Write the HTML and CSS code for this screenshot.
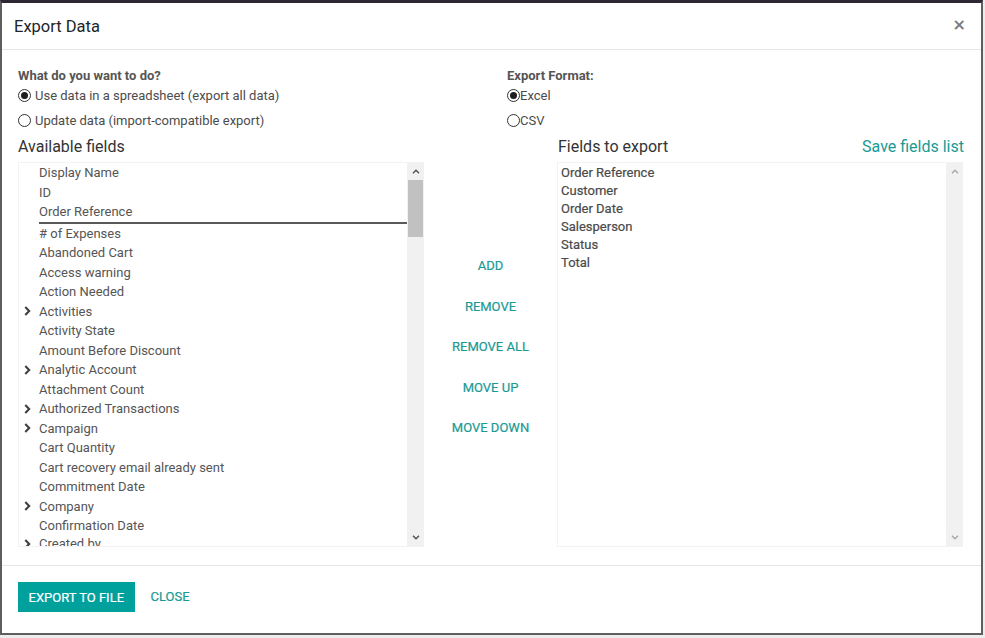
FILE: index.html
```html
<!DOCTYPE html>
<html lang="en">
<head>
<meta charset="utf-8">
<title>Export Data</title>
<link rel="stylesheet" href="styles.css">
</head>
<body>
<div class="frame">
  <header class="modal-header">
    <h4 class="modal-title">Export Data</h4>
    <span class="close">&times;</span>
  </header>
  <main class="modal-body">
    <div class="options">
      <div class="opt-col">
        <div class="opt-label">What do you want to do?</div>
        <label class="radio-row"><span class="radio checked"></span><span class="radio-text">Use data in a spreadsheet (export all data)</span></label>
        <label class="radio-row"><span class="radio"></span><span class="radio-text">Update data (import-compatible export)</span></label>
      </div>
      <div class="opt-col">
        <div class="opt-label">Export Format:</div>
        <label class="radio-row tight"><span class="radio checked"></span><span class="radio-text">Excel</span></label>
        <label class="radio-row tight csv"><span class="radio"></span><span class="radio-text">CSV</span></label>
      </div>
    </div>

    <div class="lists-head">
      <div class="head-title">Available fields</div>
      <div></div>
      <div class="head-right">
        <span class="head-title">Fields to export</span>
        <a class="save-link">Save fields list</a>
      </div>
    </div>

    <div class="lists">
      <div class="listbox">
        <ul class="items avail">
          <li><span class="slot"></span>Display Name</li>
          <li><span class="slot"></span>ID</li>
          <li class="marked"><span class="slot"></span><span class="mark">Order Reference</span></li>
          <li><span class="slot"></span># of Expenses</li>
          <li><span class="slot"></span>Abandoned Cart</li>
          <li><span class="slot"></span>Access warning</li>
          <li><span class="slot"></span>Action Needed</li>
          <li><span class="slot"><svg class="chev" viewBox="0 0 6 9"><path d="M1 1 L4.5 4.5 L1 8"/></svg></span>Activities</li>
          <li><span class="slot"></span>Activity State</li>
          <li><span class="slot"></span>Amount Before Discount</li>
          <li><span class="slot"><svg class="chev" viewBox="0 0 6 9"><path d="M1 1 L4.5 4.5 L1 8"/></svg></span>Analytic Account</li>
          <li><span class="slot"></span>Attachment Count</li>
          <li><span class="slot"><svg class="chev" viewBox="0 0 6 9"><path d="M1 1 L4.5 4.5 L1 8"/></svg></span>Authorized Transactions</li>
          <li><span class="slot"><svg class="chev" viewBox="0 0 6 9"><path d="M1 1 L4.5 4.5 L1 8"/></svg></span>Campaign</li>
          <li><span class="slot"></span>Cart Quantity</li>
          <li><span class="slot"></span>Cart recovery email already sent</li>
          <li><span class="slot"></span>Commitment Date</li>
          <li><span class="slot"><svg class="chev" viewBox="0 0 6 9"><path d="M1 1 L4.5 4.5 L1 8"/></svg></span>Company</li>
          <li><span class="slot"></span>Confirmation Date</li>
          <li class="last"><span class="slot"><svg class="chev" viewBox="0 0 6 9"><path d="M1 1 L4.5 4.5 L1 8"/></svg></span>Created by</li>
        </ul>
        <div class="scrollbar">
          <div class="sb-btn"><svg viewBox="0 0 8 5"><path d="M1 4.2 L4 1.2 L7 4.2"/></svg></div>
          <div class="sb-track"><div class="sb-thumb"></div></div>
          <div class="sb-btn"><svg viewBox="0 0 8 5"><path d="M1 0.8 L4 3.8 L7 0.8"/></svg></div>
        </div>
      </div>

      <div class="actions">
        <a class="act">ADD</a>
        <a class="act">REMOVE</a>
        <a class="act">REMOVE ALL</a>
        <a class="act">MOVE UP</a>
        <a class="act">MOVE DOWN</a>
      </div>

      <div class="listbox">
        <ul class="items chosen">
          <li>Order Reference</li>
          <li>Customer</li>
          <li>Order Date</li>
          <li>Salesperson</li>
          <li>Status</li>
          <li>Total</li>
        </ul>
        <div class="scrollbar disabled">
          <div class="sb-btn"><svg viewBox="0 0 8 5"><path d="M1 4.2 L4 1.2 L7 4.2"/></svg></div>
          <div class="sb-track"></div>
          <div class="sb-btn"><svg viewBox="0 0 8 5"><path d="M1 0.8 L4 3.8 L7 0.8"/></svg></div>
        </div>
      </div>
    </div>
  </main>
  <footer class="modal-footer">
    <button class="btn-primary">EXPORT TO FILE</button>
    <a class="btn-link">CLOSE</a>
  </footer>
</div>
</body>
</html>
```

FILE: styles.css
```css
* { box-sizing: border-box; }
html, body { margin: 0; padding: 0; }
body {
  background: #ececec;
  font-family: Roboto, "Liberation Sans", Arial, sans-serif;
  font-size: 13px;
  color: #4c4c4c;
  width: 985px;
  height: 638px;
  overflow: hidden;
}
.frame {
  width: 983px;
  height: 635px;
  background: #fff;
  border-top: 3px solid #2e2732;
  border-left: 2px solid #5e5e5e;
  border-right: 2px solid #5e5e5e;
  border-bottom: 2px solid #5e5e5e;
  display: flex;
  flex-direction: column;
}
.modal-header {
  height: 47px;
  flex: none;
  border-bottom: 1px solid #e6e6e6;
  display: flex;
  align-items: center;
  justify-content: space-between;
  padding: 0 15px 0 12px;
}
.modal-title {
  margin: 0;
  font-size: 16.5px;
  font-weight: 400;
  color: #212529;
}
.close {
  font-family: "DejaVu Sans", sans-serif;
  font-size: 16px;
  font-weight: 700;
  color: #7a7a7a;
  line-height: 1;
  margin-top: -3px;
}
.modal-body {
  flex: none;
  padding: 18px 16px 18px 16px;
  border-bottom: 1px solid #e6e6e6;
}
.options {
  display: grid;
  grid-template-columns: 1fr 1fr;
  column-gap: 31px;
}
.opt-label {
  font-weight: 700;
  line-height: 16px;
  color: #555;
}
.radio-row {
  display: flex;
  align-items: center;
  height: 20px;
  margin-top: 1px;
  margin-bottom: 5px;
}
.radio-row + .radio-row { margin-top: 0; margin-bottom: 0; }
.radio {
  width: 13px;
  height: 13px;
  border: 1px solid #333;
  border-radius: 50%;
  display: grid;
  place-items: center;
  flex: none;
  background: #fff;
}
.radio.checked::after {
  content: "";
  width: 7px;
  height: 7px;
  border-radius: 50%;
  background: #1e1e1e;
}
.radio-text { margin-left: 4px; color: #4c4c4c; }
.tight .radio-text { margin-left: 0; }
.csv { margin-top: -1px; }

.lists-head {
  display: grid;
  grid-template-columns: 406px 133px 406px;
  margin-top: 7px;
  height: 20px;
  align-items: center;
}
.head-title {
  font-size: 16px;
  color: #333;
  line-height: 20px;
}
.head-right {
  display: flex;
  justify-content: space-between;
  padding-left: 1px;
}
.save-link {
  font-size: 16px;
  color: #1a9a95;
  line-height: 20px;
  margin-right: -1px;
}

.lists {
  display: grid;
  grid-template-columns: 406px 133px 406px;
  margin-top: 5px;
  height: 385px;
}
.listbox {
  display: flex;
  border: 1px solid #f3f3f3;
  border-right: none;
  overflow: hidden;
  background: #fff;
}
.items {
  list-style: none;
  margin: 0;
  padding: 0;
  flex: 1;
  overflow: hidden;
}
.avail li {
  display: flex;
  align-items: center;
  height: 19.5px;
  color: #555;
  white-space: nowrap;
}
.avail li.last { height: 14px; align-items: flex-start; line-height: 15px; }
.avail li.marked { height: 21.5px; align-items: flex-start; }
.avail li.marked .mark {
  flex: 1;
  line-height: 19.5px;
  border-bottom: 2px solid #5a5a5a;
}
.slot {
  width: 20px;
  flex: none;
  display: flex;
  align-items: center;
  padding-left: 5px;
}
.last .slot { padding-top: 3px; }
.chev {
  width: 7px;
  height: 10px;
  fill: none;
  stroke: #404040;
  stroke-width: 1.9;
}
.chosen { padding: 1px 0 0 3px; }
.chosen li {
  height: 18px;
  line-height: 18px;
  color: #4a4a4a;
  -webkit-text-stroke: 0.2px #4a4a4a;
}
.scrollbar {
  width: 17px;
  flex: none;
  background: #f1f1f1;
  display: flex;
  flex-direction: column;
}
.sb-btn {
  height: 17px;
  display: grid;
  place-items: center;
}
.sb-btn svg {
  width: 8px;
  height: 5px;
  fill: none;
  stroke: #505050;
  stroke-width: 1.4;
}
.disabled .sb-btn svg { stroke: #a8a8a8; }
.sb-track {
  flex: 1;
  padding: 0 1px;
}
.sb-thumb {
  height: 57px;
  background: #c1c1c1;
}
.actions {
  display: flex;
  flex-direction: column;
  align-items: center;
  padding-top: 84px;
}
.act {
  display: block;
  height: 40.5px;
  line-height: 40.5px;
  color: #1a9a95;
  -webkit-text-stroke: 0.2px #1a9a95;
  text-transform: uppercase;
}
.modal-footer {
  flex: 1;
  display: flex;
  align-items: flex-start;
  padding: 16px 16px 0 16px;
}
.btn-primary {
  height: 30px;
  padding: 0 10.5px;
  border: none;
  background: #00a09d;
  color: #fff;
  font-family: Roboto, "Liberation Sans", Arial, sans-serif;
  font-size: 13px;
  font-weight: 400;
  -webkit-text-stroke: 0.2px #fff;
}
.btn-link {
  margin-left: 16px;
  line-height: 30px;
  color: #1a9a95;
  -webkit-text-stroke: 0.2px #1a9a95;
}
```
